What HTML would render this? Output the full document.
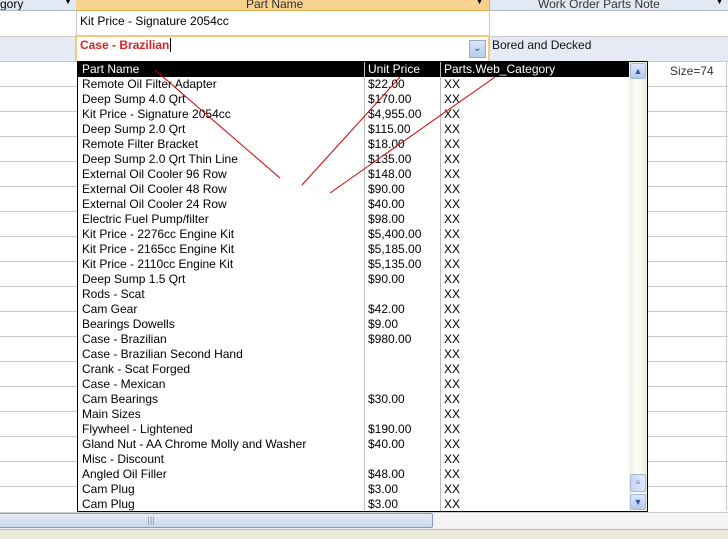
<!DOCTYPE html>
<html><head><style>
*{margin:0;padding:0;box-sizing:border-box}
body{width:728px;height:539px;overflow:hidden;background:#fff;position:relative;font-family:"Liberation Sans",sans-serif;font-size:12px;color:#000}
.a{position:absolute}
.hl{position:absolute;height:1px;background:#c8c8c8}
.row{position:absolute;left:0;height:15px;line-height:15px;white-space:nowrap}
.row span{position:absolute}
</style></head><body>
<!-- header -->
<div class="a" style="left:0;top:0;width:76px;height:11px;background:#e3e9f3;border-bottom:1px solid #b0b8c8;overflow:hidden"><span class="a" style="left:0;top:-3px">gory</span><span class="a" style="left:64px;top:-3px;font-size:8px">▼</span></div>
<div class="a" style="left:76px;top:0;width:413px;height:11px;background:#f6d28e;border-bottom:1px solid #e8b050;overflow:hidden"><span class="a" style="left:170px;top:-3px;color:#333">Part Name</span><span class="a" style="left:400px;top:-1px;font-size:7px">▼</span></div>
<div class="a" style="left:489px;top:0;width:239px;height:11px;background:#e3e9f3;border-bottom:1px solid #b0b8c8;border-left:1px solid #b0b8c8;overflow:hidden"><span class="a" style="left:48px;top:-3px;color:#333">Work Order Parts Note</span><span class="a" style="left:226px;top:-1px;font-size:7px">▼</span></div>
<!-- row 1 -->
<div class="a" style="left:76px;top:11px;width:1px;height:25px;background:#c8c8c8"></div>
<div class="a" style="left:489px;top:11px;width:1px;height:25px;background:#c8c8c8"></div>
<div class="a" style="left:80px;top:14px">Kit Price - Signature 2054cc</div>
<div class="hl" style="left:0;top:36px;width:728px"></div>
<!-- row 2 selected -->
<div class="a" style="left:0;top:37px;width:728px;height:24px;background:#e6eaf4"></div>
<div class="a" style="left:75px;top:35px;width:415px;height:27px;background:#fff;border:2px solid #f5c87a;border-bottom:none"></div>
<div class="a" style="left:80px;top:38px;color:#d22;font-weight:bold">Case - Brazilian<span style="display:inline-block;width:1px;height:14px;background:#000;vertical-align:-3px;margin-left:1px"></span></div>
<div class="a" style="left:469px;top:40px;width:17px;height:18px;background:linear-gradient(#d8e4f8,#b8ccec);border:1px solid #9ab;color:#2a4a8a;font-size:10px;text-align:center;line-height:16px">⌄</div>
<div class="a" style="left:492px;top:38px;color:#111">Bored and Decked</div>
<div class="a" style="left:670px;top:64px;color:#333">Size=74</div>
<!-- background grid lines -->
<div class="hl" style="left:0;top:61px;width:728px"></div>
<div class="hl" style="left:0;top:86px;width:728px"></div>
<div class="hl" style="left:0;top:111px;width:728px"></div>
<div class="hl" style="left:0;top:136px;width:728px"></div>
<div class="hl" style="left:0;top:161px;width:728px"></div>
<div class="hl" style="left:0;top:186px;width:728px"></div>
<div class="hl" style="left:0;top:211px;width:728px"></div>
<div class="hl" style="left:0;top:236px;width:728px"></div>
<div class="hl" style="left:0;top:261px;width:728px"></div>
<div class="hl" style="left:0;top:286px;width:728px"></div>
<div class="hl" style="left:0;top:311px;width:728px"></div>
<div class="hl" style="left:0;top:336px;width:728px"></div>
<div class="hl" style="left:0;top:361px;width:728px"></div>
<div class="hl" style="left:0;top:386px;width:728px"></div>
<div class="hl" style="left:0;top:411px;width:728px"></div>
<div class="hl" style="left:0;top:436px;width:728px"></div>
<div class="hl" style="left:0;top:461px;width:728px"></div>
<div class="hl" style="left:0;top:486px;width:728px"></div>
<div class="a" style="left:726px;top:61px;width:1px;height:450px;background:#c8c8c8"></div>
<!-- dropdown -->
<div class="a" style="left:77px;top:61px;width:571px;height:451px;background:#fff;border:1px solid #000;overflow:hidden">
 <div class="a" style="left:0;top:0;width:551px;height:15px;background:#000"></div>
 <div class="a" style="left:286px;top:0;width:1px;height:451px;background:#bbb"></div>
 <div class="a" style="left:362px;top:0;width:1px;height:451px;background:#bbb"></div>
 <div class="row" style="top:0;color:#fff"><span style="left:4px">Part Name</span><span style="left:290px">Unit Price</span><span style="left:366px">Parts.Web_Category</span></div>
 <div id="rows"></div>
 <div class="a" style="left:551px;top:0;width:18px;height:449px;background:linear-gradient(90deg,#f3f1e6,#fdfcf6,#eceadc)"></div>
 <div class="a" style="left:552px;top:1px;width:16px;height:16px;background:linear-gradient(#dce7fb,#b4c8ee);border:1px solid #a8b8d8;border-radius:2px;color:#3a5a9a;font-size:9px;text-align:center;line-height:14px">▲</div>
 <div class="a" style="left:552px;top:412px;width:16px;height:18px;background:linear-gradient(90deg,#c8d6f4,#dfe8fb);border:1px solid #a8b8d8;border-radius:2px;color:#7a8ab8;font-size:8px;text-align:center;line-height:16px">≡</div>
 <div class="a" style="left:552px;top:432px;width:16px;height:16px;background:linear-gradient(#dce7fb,#b4c8ee);border:1px solid #a8b8d8;border-radius:2px;color:#3a5a9a;font-size:9px;text-align:center;line-height:14px">▼</div>
</div>
<script>
var d=[["Remote Oil Filter Adapter","$22.00"],["Deep Sump 4.0 Qrt","$170.00"],["Kit Price - Signature 2054cc","$4,955.00"],["Deep Sump 2.0 Qrt","$115.00"],["Remote Filter Bracket","$18.00"],["Deep Sump 2.0 Qrt Thin Line","$135.00"],["External Oil Cooler 96 Row","$148.00"],["External Oil Cooler 48 Row","$90.00"],["External Oil Cooler 24 Row","$40.00"],["Electric Fuel Pump/filter","$98.00"],["Kit Price - 2276cc Engine Kit","$5,400.00"],["Kit Price - 2165cc Engine Kit","$5,185.00"],["Kit Price - 2110cc Engine Kit","$5,135.00"],["Deep Sump 1.5 Qrt","$90.00"],["Rods - Scat",""],["Cam Gear","$42.00"],["Bearings Dowells","$9.00"],["Case - Brazilian","$980.00"],["Case - Brazilian Second Hand",""],["Crank - Scat Forged",""],["Case - Mexican",""],["Cam Bearings","$30.00"],["Main Sizes",""],["Flywheel - Lightened","$190.00"],["Gland Nut - AA Chrome Molly and Washer","$40.00"],["Misc - Discount",""],["Angled Oil Filler","$48.00"],["Cam Plug","$3.00"],["Cam Plug","$3.00"]];
var h="";d.forEach(function(r,i){h+='<div class="row" style="top:'+(15+i*15)+'px"><span style="left:4px">'+r[0]+'</span><span style="left:290px">'+r[1]+'</span><span style="left:366px">XX</span></div>'});
document.getElementById("rows").innerHTML=h;
</script>
<!-- red lines -->
<svg class="a" style="left:0;top:0" width="728" height="539"><g stroke="#c00" stroke-width="1"><line x1="155" y1="70" x2="280" y2="178"/><line x1="400" y1="77" x2="302" y2="185"/><line x1="495" y1="77" x2="330" y2="193"/></g></svg>
<!-- bottom scrollbar -->
<div class="a" style="left:0;top:512px;width:728px;height:17px;background:#f3f3f3;border-top:1px solid #ccc"></div>
<div class="a" style="left:0;top:513px;width:433px;height:15px;background:linear-gradient(#e6ecf6,#c9d5ea);border:1px solid #8a9ab8;border-left:none;border-radius:0 2px 2px 0;color:#8090b0;font-size:9px;text-align:center;line-height:13px;padding-right:130px">|||</div>
<div class="a" style="left:0;top:529px;width:728px;height:10px;background:#ece9d8;border-top:1px solid #bbb"></div>
</body></html>
